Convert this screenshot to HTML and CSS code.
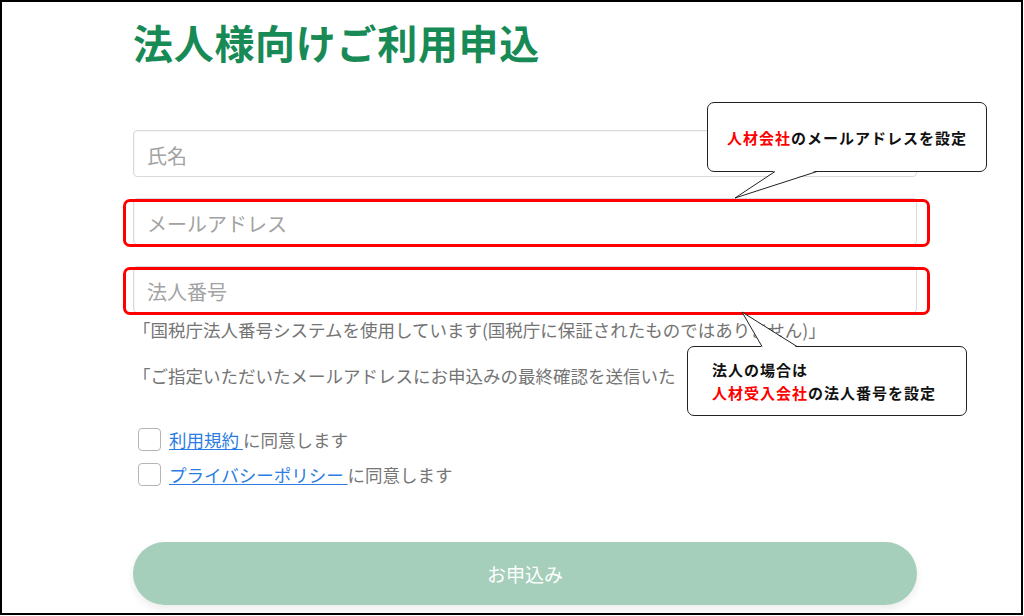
FILE: index.html
```html
<!DOCTYPE html>
<html lang="ja">
<head>
<meta charset="utf-8">
<title>法人様向けご利用申込</title>
<link rel="stylesheet" href="styles.css">
</head>
<body>
<div class="frame">
  <main class="form">
    <h1 class="title">法人様向けご利用申込</h1>
    <div class="fields">
      <div class="field"><input class="input" type="text" placeholder="氏名"></div>
      <div class="field"><input class="input" type="text" placeholder="メールアドレス"><span class="highlight"></span></div>
      <div class="field"><input class="input" type="text" placeholder="法人番号"><span class="highlight"></span></div>
    </div>
    <p class="note note-first">「国税庁法人番号システムを使用しています(国税庁に保証されたものではありません)」</p>
    <p class="note note-second">「ご指定いただいたメールアドレスにお申込みの最終確認を送信いた</p>
    <div class="agree">
      <label class="check-row"><span class="checkbox"></span><span class="label"><a class="link" href="#">利用規約 </a>に同意します</span></label>
      <label class="check-row"><span class="checkbox"></span><span class="label"><a class="link" href="#">プライバシーポリシー </a>に同意します</span></label>
    </div>
    <button class="submit" type="button">お申込み</button>
  </main>

  <div class="callout callout-email">
    <div class="callout-text"><span class="red">人材会社</span>のメールアドレスを設定</div>
    <svg class="tail tail-down" width="280" height="100" viewBox="0 0 280 100">
      <polygon points="68,68.5 110,68.5 28,96" fill="#fff"/>
      <polyline points="68,69.5 28,96 110,69.5" fill="none" stroke="#222" stroke-width="1"/>
    </svg>
  </div>

  <div class="callout callout-corp">
    <div class="callout-text callout-left">法人の場合は<br><span class="red">人材受入会社</span>の法人番号を設定</div>
    <svg class="tail tail-up" width="280" height="40" viewBox="0 -36 280 40">
      <polygon points="75,1.5 110,1.5 55,-34" fill="#fff"/>
      <polyline points="75,0.5 55,-34 110,0.5" fill="none" stroke="#222" stroke-width="1"/>
    </svg>
  </div>
</div>
</body>
</html>
```
FILE: styles.css
```css
* { box-sizing: border-box; }
html, body { margin: 0; padding: 0; background: #fff; }
body {
  font-family: "Noto Sans CJK JP", "Noto Sans", sans-serif;
}
.frame {
  position: relative;
  width: 1023px;
  height: 615px;
  border: 2px solid #000;
  overflow: hidden;
  background: #fff;
}
.form {
  width: 784px;
  margin-left: 131px;
  padding-top: 16px;
  display: flex;
  flex-direction: column;
}
.title {
  margin: 0;
  font-size: 40px;
  line-height: 48px;
  font-weight: 700;
  color: #188a56;
  letter-spacing: 0.7px;
}
.fields {
  margin-top: 64px;
  display: flex;
  flex-direction: column;
  gap: 21px;
}
.field {
  position: relative;
  height: 47px;
}
.input {
  width: 100%;
  height: 47px;
  border: 1px solid #d7dbe0;
  border-radius: 4px;
  padding: 3px 13px 0;
  font-family: inherit;
  font-size: 20px;
  color: #333;
  background: #fff;
  outline: none;
  box-shadow: inset 1px 1px 1px rgba(0,0,0,0.04);
}
.input::placeholder { color: #a2a2a2; }
.highlight {
  position: absolute;
  left: -10px;
  right: -13px;
  top: 1px;
  bottom: -2px;
  border: 3px solid #ff0000;
  border-radius: 7px;
  pointer-events: none;
}
.note {
  margin: 0;
  font-size: 17.5px;
  line-height: 24px;
  color: #747474;
  white-space: nowrap;
}
.note-first { margin-top: 5px; }
.note-second { margin-top: 22px; }
.agree {
  margin-top: 34px;
  display: flex;
  flex-direction: column;
}
.check-row {
  height: 35px;
  display: flex;
  align-items: center;
  padding-left: 5px;
  gap: 8px;
}
.checkbox {
  width: 23px;
  height: 23px;
  border: 1px solid #b5b5b5;
  border-radius: 4px;
  background: #fff;
  flex: none;
}
.label {
  font-size: 17.5px;
  color: #777;
  line-height: 24px;
}
.link {
  color: #2b7de3;
  text-decoration: underline;
  text-underline-offset: 2px;
}
.submit {
  margin-top: 50px;
  height: 63px;
  width: 784px;
  border: none;
  border-radius: 32px;
  background: #a5cfbb;
  color: #fff;
  font-family: inherit;
  font-size: 19px;
  font-weight: 400;
  box-shadow: 0 4px 8px rgba(0,0,0,0.08);
}
.callout {
  position: absolute;
  width: 280px;
  height: 70px;
  border: 1px solid #222;
  border-radius: 7px;
  background: #fff;
  display: flex;
  align-items: center;
}
.callout-email {
  left: 705px;
  top: 100px;
  justify-content: center;
}
.callout-corp {
  left: 685px;
  top: 344px;
  padding-left: 24px;
}
.callout-text {
  font-size: 15px;
  font-weight: 700;
  letter-spacing: 1px;
  line-height: 23px;
  color: #111;
  white-space: nowrap;
}
.red { color: #ff0000; }
.tail {
  position: absolute;
  left: -1px;
  overflow: visible;
  pointer-events: none;
}
.tail-down { top: -1px; }
.tail-up { top: -37px; }
```
